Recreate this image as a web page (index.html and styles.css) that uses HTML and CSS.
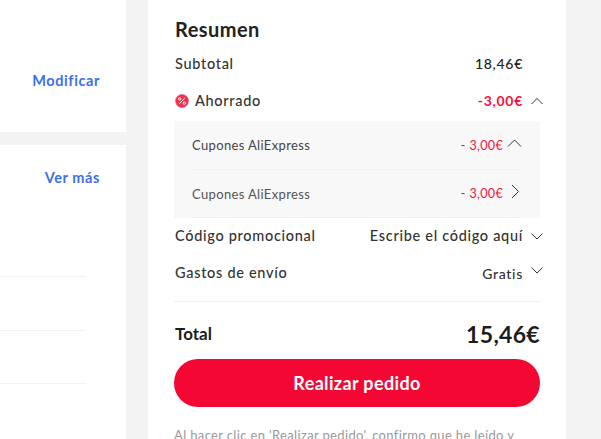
FILE: index.html
```html
<!DOCTYPE html>
<html lang="es">
<head>
    <meta charset="UTF-8">
    <title>Resumen</title>
    <link rel="stylesheet" href="styles.css">
</head>
<body>
    <div class="page">
        <div class="left">
            <div class="card card-address">
                <a class="link">Modificar</a>
            </div>
            <div class="card card-items">
                <a class="link link-more">Ver más</a>
                <div class="item-line line-first"></div>
                <div class="item-line line-second"></div>
                <div class="item-line"></div>
            </div>
        </div>

        <div class="summary">
            <h2 class="title">Resumen</h2>

            <div class="row row-subtotal">
                <span>Subtotal</span>
                <span class="value">18,46€</span>
            </div>

            <div class="row row-saved">
                <span class="saved-label">
                    <svg class="badge" width="14" height="14" viewBox="0 0 14 14">
                        <circle cx="7" cy="7" r="6.400" fill="#f5304f" stroke="#f5304f" stroke-width=".8" stroke-dasharray="1.500 .7"/>
                        <path d="M4.400 9.600 9.600 4.400" stroke="#fff" stroke-width="1" fill="none"/>
                        <circle cx="4.700" cy="4.900" r="1.200" stroke="#fff" stroke-width=".9" fill="none"/>
                        <circle cx="9.300" cy="9.100" r="1.200" stroke="#fff" stroke-width=".9" fill="none"/>
                    </svg>
                    Ahorrado
                </span>
                <span class="value value-red">-3,00€</span>
                <svg class="chev" width="12" height="12" viewBox="0 0 12 12"><path d="M.5 9 6 3.500 11.500 9"/></svg>
            </div>

            <div class="coupons">
                <div class="coupon coupon-first">
                    <span>Cupones AliExpress</span>
                    <span class="coupon-value">- 3,00€</span>
                    <svg class="chev chev-coupon" width="16" height="12" viewBox="0 0 16 12"><path d="M2 7.500 8.500 1 15 7.500"/></svg>
                </div>
                <div class="coupon coupon-second">
                    <span>Cupones AliExpress</span>
                    <span class="coupon-value">- 3,00€</span>
                    <svg class="chev chev-coupon" width="16" height="20" viewBox="0 0 16 20"><path d="M6 1 12.500 7.500 6 14"/></svg>
                </div>
            </div>

            <div class="row row-code">
                <span>Código promocional</span>
                <span class="value-plain">Escribe el código aquí</span>
                <svg class="chev" width="12" height="12" viewBox="0 0 12 12"><path d="M.5 3.500 6 9l5.500-5.500"/></svg>
            </div>

            <div class="row row-shipping">
                <span>Gastos de envío</span>
                <span class="value-plain value-free">Gratis</span>
                <svg class="chev chev-down-high" width="12" height="12" viewBox="0 0 12 12"><path d="M.5 3.500 6 9l5.500-5.500"/></svg>
            </div>

            <div class="total">
                <span class="total-label">Total</span>
                <span class="total-value">15,46€</span>
            </div>

            <button class="order">Realizar pedido</button>

            <p class="legal">Al hacer clic en 'Realizar pedido', confirmo que he leído y</p>
        </div>
    </div>
</body>
</html>
```
FILE: styles.css
```css
html, body {
    margin: 0;
    height: 100%;
    overflow: hidden;
}

body {
    background-color: #f3f3f3;
    font-family: "Lato", "Liberation Sans", sans-serif;
    color: #222;
}

.page {
    display: flex;
    gap: 22px;
    height: 439px;
}

.left {
    display: flex;
    flex-direction: column;
    gap: 13px;
    width: 126px;
}

.card {
    background-color: #fff;
}

.card-address {
    height: 132px;
    box-sizing: border-box;
    padding: 70px 26px 0 0;
    text-align: right;
}

.card-items {
    flex: 1;
    padding: 22px 26px 0 0;
    text-align: right;
}

.link {
    font-size: 14.500px;
    font-weight: 700;
    line-height: 18px;
    letter-spacing: 0.6px;
    color: #3a6ff0;
}

.item-line {
    width: 86px;
    height: 1px;
    background-color: #f2f2f2;
    margin-bottom: 53px;
}

.line-first {
    margin-top: 89px;
}

.line-second {
    margin-bottom: 52px;
}

.summary {
    width: 366px;
    padding: 0 26px;
    background-color: #fff;
}

.title {
    margin: 17px 0 0 1px;
    font-size: 20px;
    line-height: 24px;
    font-weight: 700;
    letter-spacing: 0.45px;
}

.row {
    display: flex;
    align-items: center;
    font-size: 14.500px;
    font-weight: 500;
    letter-spacing: 0.7px;
    line-height: 18px;
    color: #333;
}

.row > span:first-child {
    margin-right: auto;
    padding-left: 1px;
}

.row-subtotal {
    margin-top: 14px;
    padding-right: 17px;
}

.row-saved {
    margin-top: 19px;
}

.saved-label {
    display: flex;
    align-items: center;
    gap: 6px;
}

.value {
    font-size: 14px;
    font-weight: 500;
    color: #222;
}

.value-red {
    font-weight: 700;
    color: #f5103c;
}

.chev {
    flex: none;
    margin-left: 8px;
    margin-right: -3px;
}

.chev path {
    fill: none;
    stroke: #333;
    stroke-width: 1;
}

.coupons {
    margin-top: 11px;
    padding: 0 18px;
    background-color: #f8f8f8;
}

.coupon {
    display: flex;
    align-items: center;
    height: 49px;
    font-size: 13px;
    letter-spacing: 0.35px;
    color: #444;
    border-bottom: 1px solid #f1f1f1;
    box-sizing: border-box;
}

.coupon > span:first-child {
    margin-right: auto;
}

.coupon-second {
    height: 48px;
    color: #555;
}

.coupon-value {
    font-size: 12.500px;
    color: #f5103c;
}

.chev-coupon {
    margin-left: 3px;
    margin-right: 0;
}

.row-code {
    margin-top: 9px;
}

.value-plain {
    font-weight: 500;
}

.row-shipping {
    margin-top: 18px;
}

.value-free {
    font-size: 14px;
    margin-top: 2px;
}

.chev-down-high {
    margin-top: -6px;
}

.total {
    display: flex;
    justify-content: space-between;
    align-items: center;
    margin-top: 18px;
    padding-top: 20px;
    border-top: 1px solid #f0f0f0;
}

.total-label {
    padding-left: 1px;
    font-size: 17px;
    font-weight: 700;
    line-height: 24px;
    color: #1c1c1c;
}

.total-value {
    font-size: 23px;
    font-weight: 700;
    line-height: 24px;
    letter-spacing: 0.3px;
    color: #1c1c1c;
}

.order {
    display: block;
    width: 100%;
    height: 48px;
    margin-top: 13px;
    border: 0;
    border-radius: 24px;
    background-color: #f40733;
    color: #fff;
    font-family: inherit;
    font-size: 18px;
    font-weight: 700;
    letter-spacing: 0.35px;
}

.legal {
    margin: 20px 0 0 0;
    white-space: nowrap;
    font-size: 13px;
    line-height: 16px;
    letter-spacing: 0.35px;
    color: #999;
}
```
